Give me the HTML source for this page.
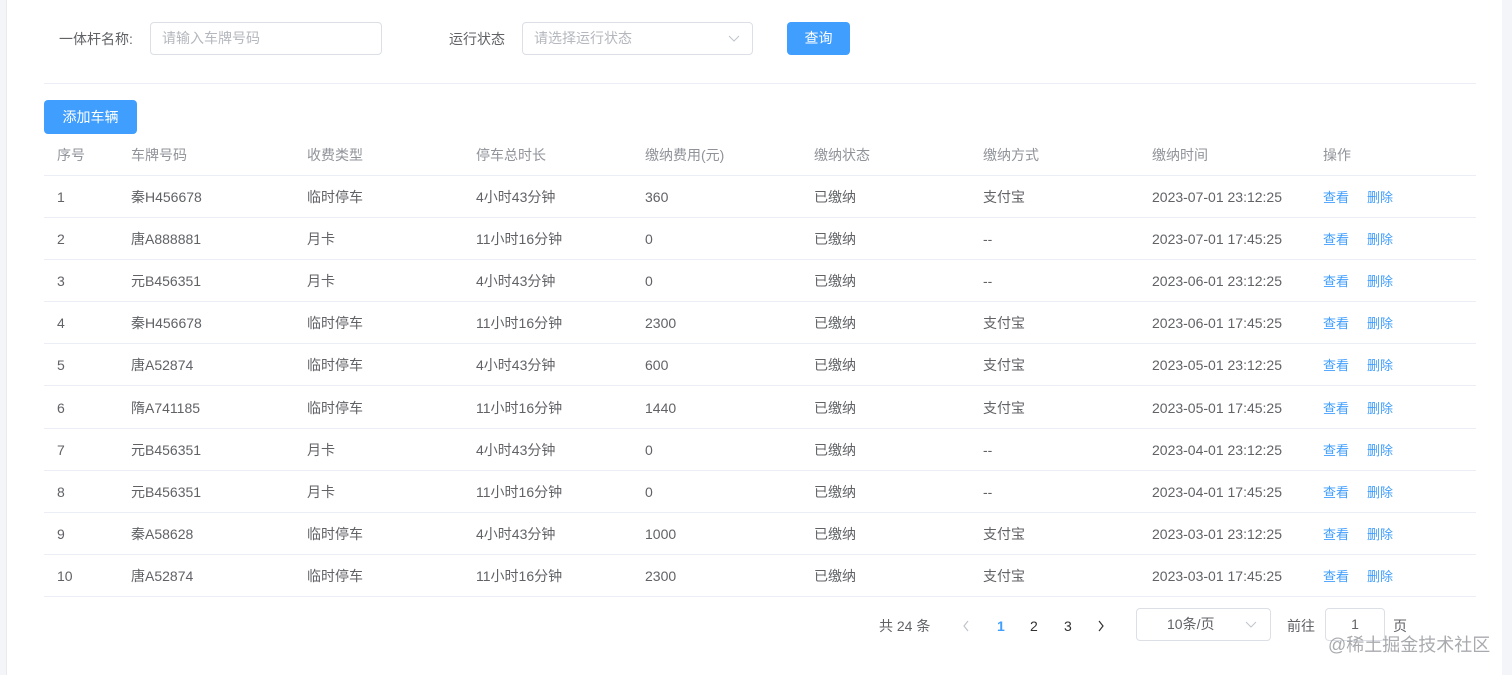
<!DOCTYPE html><html><head><meta charset="utf-8"><style>
*{margin:0;padding:0;box-sizing:border-box}
body{width:1512px;height:675px;background:#fff;font-family:"Liberation Sans","Noto Sans CJK SC",sans-serif;font-size:14px;line-height:20px;color:#606266;position:relative;overflow:hidden}
.abs{position:absolute}
.lg{left:0;top:0;width:7px;height:675px;background:#f4f5f8;border-right:1px solid #e8eaee}
.rg{left:1502px;top:0;width:10px;height:675px;background:#f4f5f8}
.inp{border:1px solid #dcdfe6;border-radius:4px;height:33px;color:#b4b7bd;line-height:31px;padding-left:11px}
.btn{background:#409eff;color:#fff;border-radius:4px;text-align:center}
.hr{height:1px;background:#ebeef5;left:44px;width:1432px}
.cell{position:absolute;white-space:nowrap;height:20px;line-height:20px}
.th{color:#909399}
a{color:#409eff;font-size:13px;text-decoration:none}
</style></head><body>
<div class="abs lg"></div><div class="abs rg"></div>
<div class="abs" style="left:59px;top:29px;color:#606266">一体杆名称:</div>
<div class="abs inp" style="left:150px;top:22px;width:232px">请输入车牌号码</div>
<div class="abs" style="left:449px;top:29px">运行状态</div>
<div class="abs inp" style="left:522px;top:22px;width:231px">请选择运行状态<svg class="abs" style="left:205px;top:12px" width="12" height="8"><path d="M1 1L6 6L11 1" stroke="#c0c4cc" fill="none"/></svg></div>
<div class="abs btn" style="left:787px;top:22px;width:63px;height:33px;line-height:33px">查询</div>
<div class="abs hr" style="top:83px"></div>
<div class="abs btn" style="left:44px;top:100px;width:93px;height:34px;line-height:34px">添加车辆</div>
<div id="t"></div>
<div class="abs" style="left:879px;top:616px">共 24 条</div>
<svg class="abs" style="left:962px;top:620px" width="8" height="12"><path d="M6 1L2 6L6 11" stroke="#c0c4cc" fill="none" stroke-width="1.2"/></svg>
<div class="abs" style="left:997px;top:616px;color:#409eff;font-weight:bold">1</div>
<div class="abs" style="left:1030px;top:616px;color:#303133">2</div>
<div class="abs" style="left:1064px;top:616px;color:#303133">3</div>
<svg class="abs" style="left:1097px;top:620px" width="8" height="12"><path d="M2 1L6 6L2 11" stroke="#303133" fill="none" stroke-width="1.2"/></svg>
<div class="abs inp" style="left:1136px;top:608px;width:135px;color:#606266;padding-left:30px">10条/页<svg class="abs" style="left:108px;top:12px" width="12" height="8"><path d="M1 1L6 6L11 1" stroke="#c0c4cc" fill="none"/></svg></div>
<div class="abs" style="left:1287px;top:616px">前往</div>
<div class="abs inp" style="left:1325px;top:608px;width:60px;color:#606266;padding:0;text-align:center">1</div>
<div class="abs" style="left:1393px;top:616px">页</div>
<div class="abs" style="left:1328px;top:633px;color:#9a9ca0;font-size:18px;line-height:24px;opacity:.85">@稀土掘金技术社区</div>
<script>
var xs=[57,131,307,476,645,814,983,1152,1323];
var h=["序号","车牌号码","收费类型","停车总时长","缴纳费用(元)","缴纳状态","缴纳方式","缴纳时间","操作"];
var d=[["秦H456678","临时停车","4小时43分钟","360","支付宝","2023-07-01 23:12:25"],["唐A888881","月卡","11小时16分钟","0","--","2023-07-01 17:45:25"],["元B456351","月卡","4小时43分钟","0","--","2023-06-01 23:12:25"],["秦H456678","临时停车","11小时16分钟","2300","支付宝","2023-06-01 17:45:25"],["唐A52874","临时停车","4小时43分钟","600","支付宝","2023-05-01 23:12:25"],["隋A741185","临时停车","11小时16分钟","1440","支付宝","2023-05-01 17:45:25"],["元B456351","月卡","4小时43分钟","0","--","2023-04-01 23:12:25"],["元B456351","月卡","11小时16分钟","0","--","2023-04-01 17:45:25"],["秦A58628","临时停车","4小时43分钟","1000","支付宝","2023-03-01 23:12:25"],["唐A52874","临时停车","11小时16分钟","2300","支付宝","2023-03-01 17:45:25"]];
var s="";
h.forEach(function(t,i){s+='<div class="cell th" style="left:'+xs[i]+'px;top:145px">'+t+'</div>'});
s+='<div class="abs hr" style="top:175px"></div>';
d.forEach(function(r,j){var y=Math.round(187+j*42.1);var v=[j+1,r[0],r[1],r[2],r[3],"已缴纳",r[4],r[5]];
v.forEach(function(t,i){s+='<div class="cell" style="left:'+xs[i]+'px;top:'+y+'px">'+t+'</div>'});
s+='<div class="cell" style="left:1323px;top:'+y+'px"><a>查看</a></div><div class="cell" style="left:1367px;top:'+y+'px"><a>删除</a></div>';
s+='<div class="abs hr" style="top:'+Math.round(217+j*42.1)+'px"></div>';});
document.getElementById("t").innerHTML=s;
</script>
</body></html>
